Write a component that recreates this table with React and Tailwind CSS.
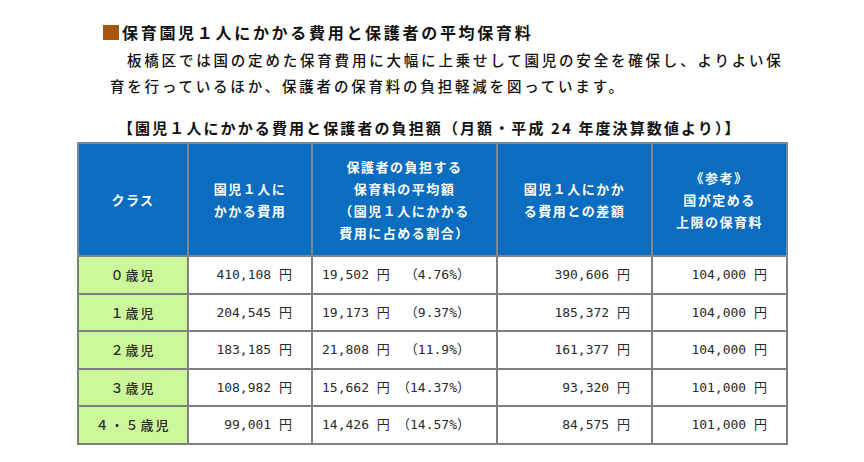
const rows = [
  { cls: '０歳児', cost: '410,108 円', fee: '19,502 円', pct: '（4.76%）', diff: '390,606 円', cap: '104,000 円' },
  { cls: '１歳児', cost: '204,545 円', fee: '19,173 円', pct: '（9.37%）', diff: '185,372 円', cap: '104,000 円' },
  { cls: '２歳児', cost: '183,185 円', fee: '21,808 円', pct: '（11.9%）', diff: '161,377 円', cap: '104,000 円' },
  { cls: '３歳児', cost: '108,982 円', fee: '15,662 円', pct: '（14.37%）', diff: '93,320 円', cap: '101,000 円' },
  { cls: '４・５歳児', cost: '99,001 円', fee: '14,426 円', pct: '（14.57%）', diff: '84,575 円', cap: '101,000 円' },
]

const jp = { fontFamily: '"Noto Sans CJK JP", "DejaVu Sans", sans-serif' }
const num = { fontFamily: '"DejaVu Sans Mono", "Noto Sans CJK JP", monospace' }

function HeadCell({ lines }) {
  return (
    <th className="border-2 border-[#7f8890] bg-[#0a6dbf] p-0 text-center align-middle text-[13px] font-bold leading-[22px] tracking-[1.5px] text-white">
      {lines.map((l) => (
        <div key={l} className="whitespace-nowrap">{l}</div>
      ))}
    </th>
  )
}

export default function App() {
  return (
    <div className="min-h-[462px] w-[864px] bg-white pt-[20px] text-[#111]" style={jp}>
      <h2 className="flex items-center pl-[103px] text-[16px] font-bold leading-[24px] tracking-[2.7px]">
        <span className="mr-[3px] inline-block h-[15px] w-[16px] bg-[#a8560f]" />
        保育園児１人にかかる費用と保護者の平均保育料
      </h2>

      <p className="mt-[3px] whitespace-nowrap pl-[110px] indent-[17px] text-[14.5px] font-medium leading-[26px] tracking-[2.8px] text-[#111]">
        板橋区では国の定めた保育費用に大幅に上乗せして園児の安全を確保し、よりよい保
        <br />
        育を行っているほか、保護者の保育料の負担軽減を図っています。
      </p>

      <div className="mt-[17px] whitespace-nowrap pl-[118px] text-[15px] font-bold leading-[24px] tracking-[2.1px]">
        【園児１人にかかる費用と保護者の負担額（月額・平成 24 年度決算数値より）】
      </div>

      <table className="ml-[77px] mt-[2px] w-[709px] table-fixed border-collapse border-2 border-[#7f7f7f]">
        <colgroup>
          <col className="w-[110px]" />
          <col className="w-[124px]" />
          <col className="w-[185px]" />
          <col className="w-[155px]" />
          <col className="w-[135px]" />
        </colgroup>
        <thead>
          <tr className="h-[113px]">
            <HeadCell lines={['クラス']} />
            <HeadCell lines={['園児１人に', 'かかる費用']} />
            <HeadCell lines={['保護者の負担する', '保育料の平均額', '（園児１人にかかる', '費用に占める割合）']} />
            <HeadCell lines={['園児１人にかか', 'る費用との差額']} />
            <HeadCell lines={['《参考》', '国が定める', '上限の保育料']} />
          </tr>
        </thead>
        <tbody>
          {rows.map((r) => (
            <tr key={r.cls} className="h-[37.6px]">
              <td className="border-2 border-[#7f7f7f] bg-[#ccf79a] p-0 text-center text-[13px] font-medium tracking-[2px] text-[#2a2a2a]">
                {r.cls}
              </td>
              <td className="border-2 border-[#7f7f7f] p-0 pr-[19px] text-right text-[13px] text-[#2a2a2a]" style={num}>
                {r.cost}
              </td>
              <td className="border-2 border-[#7f7f7f] p-0 pl-[9px] pr-[26px] text-[13px] text-[#2a2a2a]" style={num}>
                <div className="flex justify-between whitespace-nowrap">
                  <span>{r.fee}</span>
                  <span>{r.pct}</span>
                </div>
              </td>
              <td className="border-2 border-[#7f7f7f] p-0 pr-[21px] text-right text-[13px] text-[#2a2a2a]" style={num}>
                {r.diff}
              </td>
              <td className="border-2 border-[#7f7f7f] p-0 pr-[19px] text-right text-[13px] text-[#2a2a2a]" style={num}>
                {r.cap}
              </td>
            </tr>
          ))}
        </tbody>
      </table>
    </div>
  )
}
